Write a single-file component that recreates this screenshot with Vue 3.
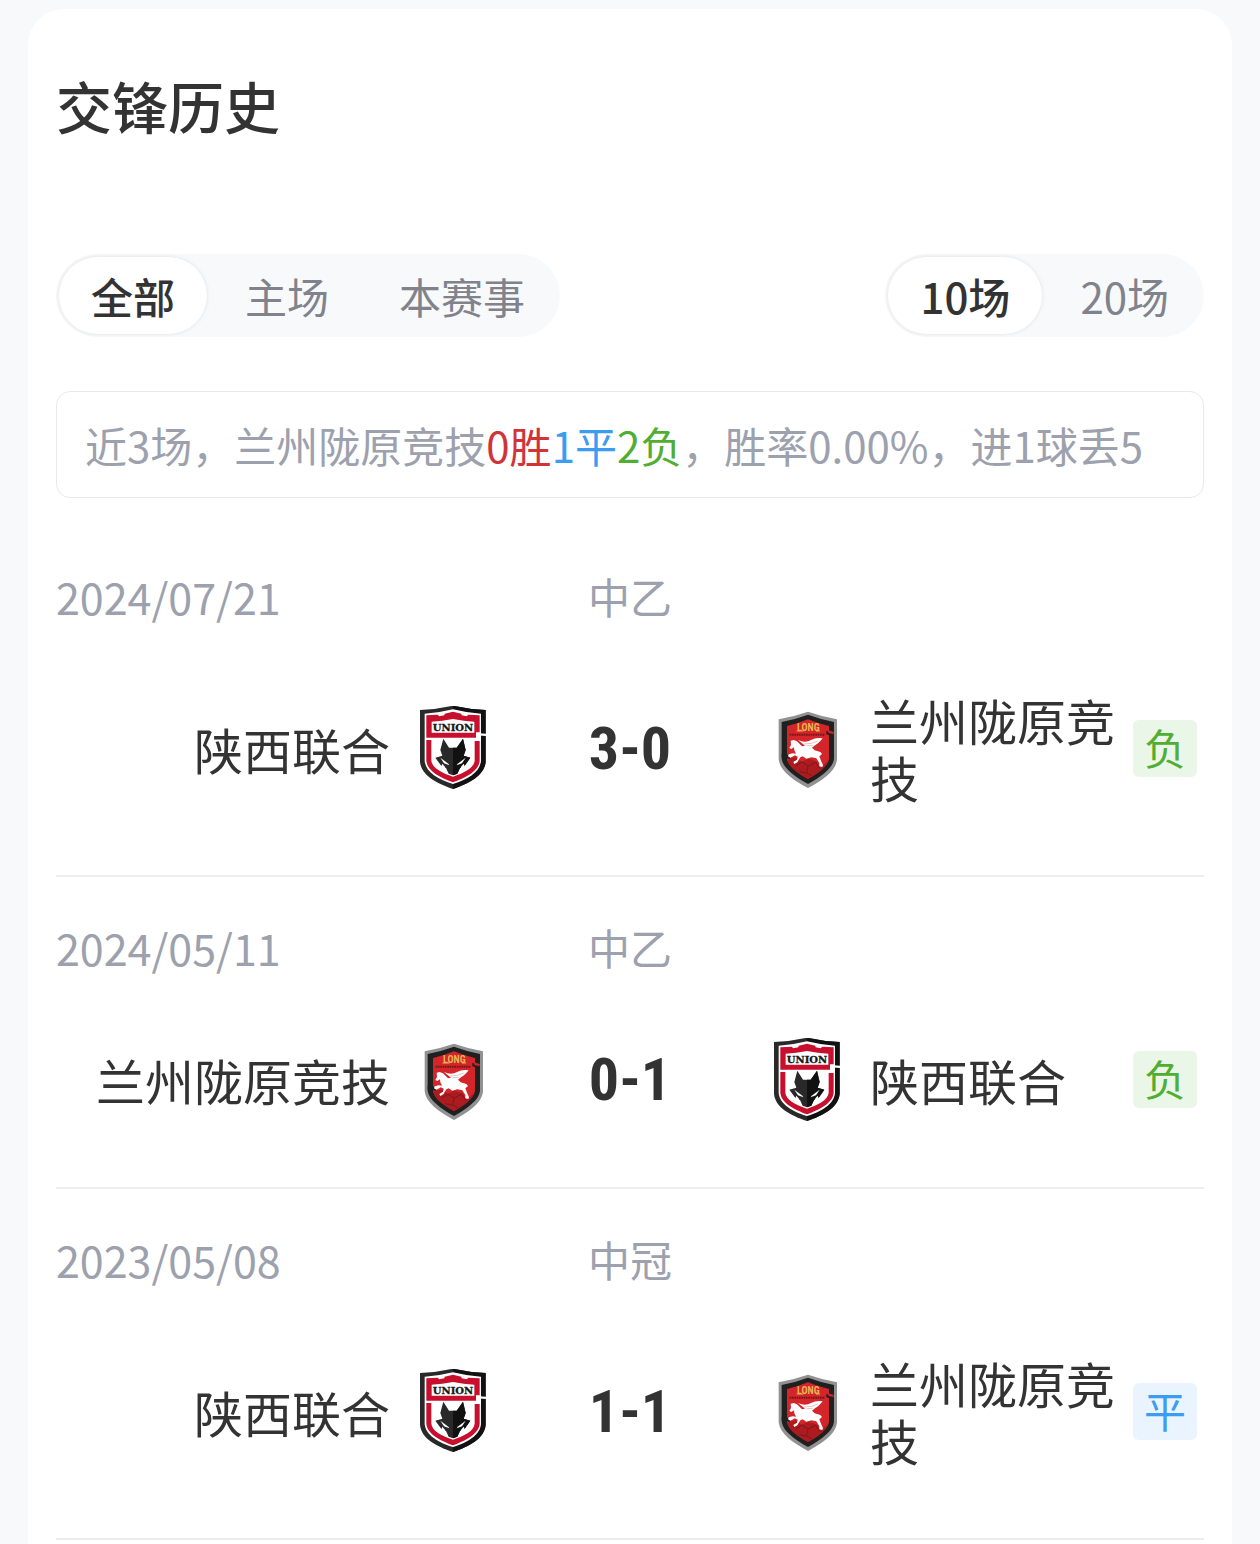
<template>
  <main class="page">
    <section class="card">
      <h2 class="title">交锋历史</h2>

      <div class="filters">
        <div class="segment">
          <button
            v-for="s in scopes"
            :key="s"
            type="button"
            class="segment-btn"
            :class="{ active: s === scope }"
            :aria-pressed="s === scope"
            @click="scope = s"
          >{{ s }}</button>
        </div>
        <div class="segment">
          <button
            v-for="c in counts"
            :key="c"
            type="button"
            class="segment-btn"
            :class="{ active: c === count }"
            :aria-pressed="c === count"
            @click="count = c"
          >{{ c }}场</button>
        </div>
      </div>

      <p class="summary">近3场，兰州陇原竞技<span class="win">0胜</span><span class="draw">1平</span><span class="loss">2负</span>，胜率0.00%，进1球丢5</p>

      <ul class="matches">
        <li v-for="m in matches" :key="m.date" class="match">
          <div class="meta">
            <time>{{ m.date }}</time>
            <span class="league">{{ m.league }}</span>
          </div>
          <div class="teams">
            <strong class="score">{{ m.score }}</strong>
            <div v-for="side in sides" :key="side" class="team" :class="side">
              <svg v-if="m[side] === 'union'" class="crest" viewBox="33 38 252 252" aria-hidden="true">
                <path d="M60 50Q112 48 159 37Q206 48 257 50V205C254 246 208 270 159 287C110 270 63 246 60 205Z" fill="#292929" />
                <path d="M159 37Q206 48 257 50V205C254 246 208 270 159 287Z" fill="#111" />
                <path d="M74 61Q116 59 159 48Q202 59 243 61V203C240 237 202 259 159 272C116 259 77 237 74 203Z" fill="#fff" />
                <path d="M79 66L113 64L118 69L133 66L134 61L159 55L184 61L185 66L200 69L205 64L239 66V117H228V133H79Z" fill="#c8102e" />
                <path d="M95 85Q127 84 159 77Q191 84 223 85V118H95Z" fill="#fff" />
                <path d="M79 140H94V202C97 225 126 239 159 250C192 239 221 225 224 202V143H239V203C236 233 199 252 159 267C119 252 82 233 79 203Z" fill="#c8102e" />
                <path d="M228 119L258 121V128L228 126Z" fill="#fff" />
                <text x="159" y="112" text-anchor="middle" font-family="DejaVu Serif, serif" font-weight="700" font-size="30" fill="#171717" stroke="#171717" stroke-width="1">UNION</text>
                <path d="M130 136L147 163H170L189 136L197 170L191 187L211 193L191 222L180 224L172 241L159 246L146 241L138 224L127 222L106 193L127 187L121 170Z" fill="#292929" />
                <path d="M159 163H170L189 136L197 170L191 187L211 193L191 222L180 224L172 241L159 246Z" fill="#111" />
                <path d="M121 193L145 211L148 216L132 210Z" fill="#fff" />
                <path d="M197 193L173 211L170 216L186 210Z" fill="#fff" />
                <path d="M127 211L136 222L132 231L123 221Z" fill="#fff" />
                <path d="M191 211L182 222L186 231L195 221Z" fill="#fff" />
              </svg>
              <svg v-else class="crest" viewBox="15 36 252 252" aria-hidden="true">
                <path d="M56 76Q100 68 144 53Q188 68 231 76V196C229 229 190 258 144 282C98 258 59 229 56 196Z" fill="#929292" />
                <path d="M65 84Q106 76 144 62Q182 76 222 84V195C219 222 184 248 144 270C104 248 69 222 65 195Z" fill="#202020" />
                <path d="M81 96Q116 88 144 76Q172 88 207 96V194C205 215 177 236 144 255C111 236 83 215 81 194Z" fill="#d3252a" />
                <path d="M82 198L106 190L126 203L144 194L170 202L180 221L205 201C199 220 173 239 144 255C112 237 87 220 82 198Z" fill="#ab1b1f" />
                <path d="M107 216L126 204L144 216L167 205L181 224M144 216L140 237L157 246M140 237L119 233" fill="none" stroke="#801719" stroke-width="3" />
                <path d="M65 179L91 183V195L65 190Z" fill="#202020" />
                <path d="M199 111L222 117V128L199 121Z" fill="#202020" />
                <path d="M205 109L221 114V120L205 117Z" fill="#d3252a" />
                <!-- wordmark and the small strapline under it -->
                <text x="145" y="112" text-anchor="middle" font-family="Roboto Condensed, Roboto, sans-serif" font-weight="700" font-size="30" fill="#ebb354">LONG</text>
                <path d="M110 111H130M168 111H180" stroke="#ebb354" stroke-width="3" />
                <path d="M89 122H195" stroke="#7a1719" stroke-width="6" stroke-dasharray="5 2" />
                <path d="M92 140L101 138L111 142L126 157L135 155L125 147L114 138Q136 148 153 138Q168 130 188 133L181 141L174 148L165 154L156 161L164 169L181 174L186 180L178 187L183 200L189 214L187 219L178 217V207L169 193L154 190L139 194L128 187L121 190L112 205L103 210L100 204L111 197L113 188L105 184L91 191L84 187L86 181L98 178L108 179L103 169L102 160L94 165L88 162L93 153Z" fill="#fff" />
                <path d="M132 150L155 148L173 141M140 155L158 154" fill="none" stroke="#d9a5a4" stroke-width="2" />
              </svg>
              <span class="name">{{ teams[m[side]] }}</span>
              <span v-if="side === 'away'" class="badge" :class="m.result">{{ resultText[m.result] }}</span>
            </div>
          </div>
        </li>
      </ul>
    </section>
  </main>
</template>

<script setup>
import { ref } from 'vue'

const scopes = ['全部', '主场', '本赛事']
const scope = ref('全部')

const counts = [10, 20]
const count = ref(10)

const sides = ['home', 'away']

const teams = {
  union: '陕西联合',
  longyuan: '兰州陇原竞技'
}

const resultText = { win: '胜', draw: '平', loss: '负' }

const matches = [
  { date: '2024/07/21', league: '中乙', home: 'union', away: 'longyuan', score: '3-0', result: 'loss' },
  { date: '2024/05/11', league: '中乙', home: 'longyuan', away: 'union', score: '0-1', result: 'loss' },
  { date: '2023/05/08', league: '中冠', home: 'union', away: 'longyuan', score: '1-1', result: 'draw' }
]
</script>

<style>
body {
  background-color: #f7f9fb;
}
</style>

<style scoped>
.page {
  box-sizing: border-box;
  min-height: 100vh;
  display: flex;
  flex-direction: column;
  padding: 9px 28px 0;
  font-family: "Noto Sans CJK SC", sans-serif;
  color: #333;
}

.card {
  flex: 1;
  background-color: #fff;
  border-radius: 36px 36px 0 0;
  padding: 56px 28px 0;
}

.title {
  margin: 0 0 109px;
  font-size: 56px;
  line-height: 80px;
  font-weight: 500;
}

.filters {
  display: flex;
  justify-content: space-between;
  margin-bottom: 54px;
}

.segment {
  display: flex;
  gap: 6px;
  padding: 3px;
  border-radius: 42px;
  background-color: #f7f9fb;
}

.segment-btn {
  height: 77px;
  padding: 0 32px;
  border: none;
  border-radius: 39px;
  background: none;
  font-family: inherit;
  font-size: 42px;
  line-height: 58px;
  color: #80828c;
  cursor: pointer;
}

.segment-btn.active {
  background-color: #fff;
  color: #333;
  font-weight: 500;
  box-shadow: 0 0 4px rgba(0, 0, 0, 0.1);
}

.summary {
  margin: 0 0 28px;
  padding: 24px 28px;
  border: 1px solid #e8e9eb;
  border-radius: 14px;
  font-size: 42px;
  line-height: 57px;
  color: #9ca1ad;
  white-space: nowrap;
  overflow: hidden;
}

.win {
  color: #d03438;
}

.draw {
  color: #3b9cf0;
}

.loss {
  color: #50ae32;
}

.matches {
  margin: 0;
  padding: 0;
  list-style: none;
}

.match {
  padding: 41px 0 70px;
  border-bottom: 2px solid #ededef;
}

.meta,
.teams {
  display: grid;
  grid-template-columns: 1fr 270px 1fr;
  align-items: center;
}

.meta {
  margin-bottom: 66px;
  font-size: 42px;
  line-height: 58px;
  color: #9ca1ad;
}

.meta time {
  font-size: 43px;
}

.league {
  text-align: center;
}

.team {
  grid-row: 1;
  display: flex;
  align-items: center;
  gap: 21px;
  min-width: 0;
}

.home {
  grid-column: 1;
  flex-direction: row-reverse;
}

.away {
  grid-column: 3;
}

.name {
  font-size: 49px;
  line-height: 57px;
}

.away .name {
  flex: 1;
  margin-right: -21px;
}

.crest {
  flex: none;
  width: 84px;
  height: 84px;
  margin: -5px 0;
}

.score {
  grid-row: 1;
  grid-column: 2;
  font-family: "Roboto Condensed", Roboto, sans-serif;
  font-size: 60px;
  line-height: 75px;
  font-weight: 700;
  text-align: center;
}

.badge {
  flex: none;
  width: 64px;
  margin-right: 7px;
  padding-bottom: 4px;
  border-radius: 6px;
  font-size: 42px;
  line-height: 53px;
  text-align: center;
}

.badge.loss {
  background-color: #eaf7e8;
}

.badge.draw {
  background-color: #e9f4ff;
}

.badge.win {
  background-color: #fdecec;
}
</style>
